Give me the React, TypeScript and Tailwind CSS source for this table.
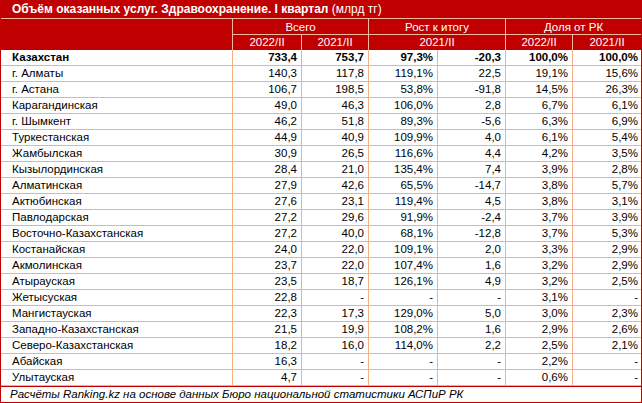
const rows: string[][] = [
  ["Казахстан", "733,4", "753,7", "97,3%", "-20,3", "100,0%", "100,0%"],
  ["г. Алматы", "140,3", "117,8", "119,1%", "22,5", "19,1%", "15,6%"],
  ["г. Астана", "106,7", "198,5", "53,8%", "-91,8", "14,5%", "26,3%"],
  ["Карагандинская", "49,0", "46,3", "106,0%", "2,8", "6,7%", "6,1%"],
  ["г. Шымкент", "46,2", "51,8", "89,3%", "-5,6", "6,3%", "6,9%"],
  ["Туркестанская", "44,9", "40,9", "109,9%", "4,0", "6,1%", "5,4%"],
  ["Жамбылская", "30,9", "26,5", "116,6%", "4,4", "4,2%", "3,5%"],
  ["Кызылординская", "28,4", "21,0", "135,4%", "7,4", "3,9%", "2,8%"],
  ["Алматинская", "27,9", "42,6", "65,5%", "-14,7", "3,8%", "5,7%"],
  ["Актюбинская", "27,6", "23,1", "119,4%", "4,5", "3,8%", "3,1%"],
  ["Павлодарская", "27,2", "29,6", "91,9%", "-2,4", "3,7%", "3,9%"],
  ["Восточно-Казахстанская", "27,2", "40,0", "68,1%", "-12,8", "3,7%", "5,3%"],
  ["Костанайская", "24,0", "22,0", "109,1%", "2,0", "3,3%", "2,9%"],
  ["Акмолинская", "23,7", "22,0", "107,4%", "1,6", "3,2%", "2,9%"],
  ["Атырауская", "23,5", "18,7", "126,1%", "4,9", "3,2%", "2,5%"],
  ["Жетысуская", "22,8", "-", "-", "-", "3,1%", "-"],
  ["Мангистауская", "22,3", "17,3", "129,0%", "5,0", "3,0%", "2,3%"],
  ["Западно-Казахстанская", "21,5", "19,9", "108,2%", "1,6", "2,9%", "2,6%"],
  ["Северо-Казахстанская", "18,2", "16,0", "114,0%", "2,2", "2,5%", "2,1%"],
  ["Абайская", "16,3", "-", "-", "-", "2,2%", "-"],
  ["Улытауская", "4,7", "-", "-", "-", "0,6%", "-"],
];

const cols = "grid grid-cols-[232px_69px_67px_69px_68px_67px_68px]";

export default function App() {
  return (
    <div
      className="w-[642px] h-[403px] bg-white text-[11.5px] text-black"
      style={{ fontFamily: '"Liberation Sans", Arial, sans-serif' }}
    >
      <div className="border-x border-[#c00000]">
        <div className="bg-[#c00000] text-white">
          <div className="h-[19px] border-b border-[#f4b9a0] pl-[11px] leading-[19px] text-[12px] font-bold whitespace-nowrap">
            Объём оказанных услуг. Здравоохранение. I квартал <span className="font-normal">(млрд тг)</span>
          </div>
          <div className="grid grid-cols-[232px_136px_137px_135px] h-[31px]">
            <div className="border-r border-[#f4b9a0]" />
            <div className="flex flex-col">
              <div className="h-[16px] leading-[16px] text-center border-r border-b border-[#f4b9a0]">Всего</div>
              <div className="grid grid-cols-[69px_67px] h-[15px] leading-[15px] text-center">
                <div className="border-r border-[#f4b9a0]">2022/II</div>
                <div className="border-r border-[#f4b9a0]">2021/II</div>
              </div>
            </div>
            <div className="flex flex-col">
              <div className="h-[16px] leading-[16px] text-center border-r border-b border-[#f4b9a0]">Рост к итогу</div>
              <div className="h-[15px] leading-[15px] text-center border-r border-[#f4b9a0]">2021/II</div>
            </div>
            <div className="flex flex-col">
              <div className="h-[16px] leading-[16px] text-center border-b border-[#f4b9a0]">Доля от РК</div>
              <div className="grid grid-cols-[67px_68px] h-[15px] leading-[15px] text-center">
                <div className="border-r border-[#f4b9a0]">2022/II</div>
                <div>2021/II</div>
              </div>
            </div>
          </div>
        </div>

        {rows.map((r, i) => (
          <div key={r[0]} className={`${cols} h-[16px] leading-[15px] ${i === 0 ? "font-bold" : ""}`}>
            {r.map((v, j) => (
              <div
                key={j}
                className={
                  j === 0
                    ? "pl-[11px] border-r border-b border-[#f4b084] whitespace-nowrap"
                    : j === 6
                      ? "pr-[3px] text-right border-b border-[#f4b084]"
                      : "pr-[4px] text-right border-r border-b border-[#f4b084]"
                }
              >
                {v}
              </div>
            ))}
          </div>
        ))}
      </div>
      <div className="h-[17px] border border-[#c00000] pl-[9px] leading-[15px] italic whitespace-nowrap">
        Расчёты Ranking.kz на основе данных Бюро национальной статистики АСПиР РК
      </div>
    </div>
  );
}
